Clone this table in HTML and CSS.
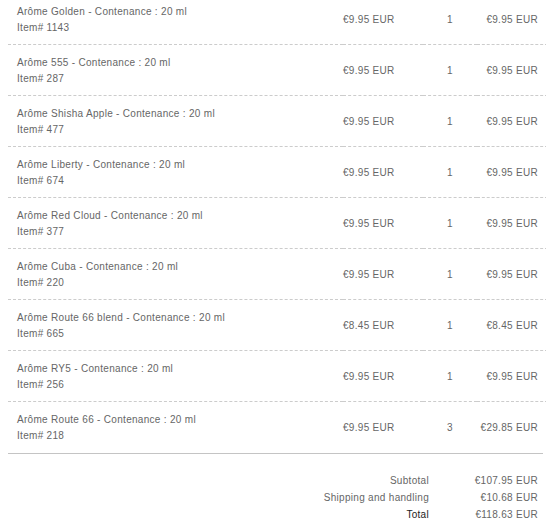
FILE: index.html
```html
<!DOCTYPE html>
<html>
<head>
<meta charset="utf-8">
<link rel="stylesheet" href="styles.css">
</head>
<body>
<div class="cart">
  <table class="items">
    <colgroup><col class="c-name"><col class="c-price"><col class="c-qty"><col class="c-total"></colgroup>
    <tbody>
      <tr class="first"><td class="name">Arôme Golden - Contenance : 20 ml<br>Item# 1143</td><td class="price">€9.95 EUR</td><td class="qty">1</td><td class="total">€9.95 EUR</td></tr>
      <tr><td class="name">Arôme 555 - Contenance : 20 ml<br>Item# 287</td><td class="price">€9.95 EUR</td><td class="qty">1</td><td class="total">€9.95 EUR</td></tr>
      <tr><td class="name">Arôme Shisha Apple - Contenance : 20 ml<br>Item# 477</td><td class="price">€9.95 EUR</td><td class="qty">1</td><td class="total">€9.95 EUR</td></tr>
      <tr><td class="name">Arôme Liberty - Contenance : 20 ml<br>Item# 674</td><td class="price">€9.95 EUR</td><td class="qty">1</td><td class="total">€9.95 EUR</td></tr>
      <tr><td class="name">Arôme Red Cloud - Contenance : 20 ml<br>Item# 377</td><td class="price">€9.95 EUR</td><td class="qty">1</td><td class="total">€9.95 EUR</td></tr>
      <tr><td class="name">Arôme Cuba - Contenance : 20 ml<br>Item# 220</td><td class="price">€9.95 EUR</td><td class="qty">1</td><td class="total">€9.95 EUR</td></tr>
      <tr><td class="name">Arôme Route 66 blend - Contenance : 20 ml<br>Item# 665</td><td class="price">€8.45 EUR</td><td class="qty">1</td><td class="total">€8.45 EUR</td></tr>
      <tr><td class="name">Arôme RY5 - Contenance : 20 ml<br>Item# 256</td><td class="price">€9.95 EUR</td><td class="qty">1</td><td class="total">€9.95 EUR</td></tr>
      <tr class="last"><td class="name">Arôme Route 66 - Contenance : 20 ml<br>Item# 218</td><td class="price">€9.95 EUR</td><td class="qty">3</td><td class="total">€29.85 EUR</td></tr>
    </tbody>
  </table>
  <div class="rule"></div>
  <table class="summary">
    <tr><td class="label">Subtotal</td><td class="value">€107.95 EUR</td></tr>
    <tr><td class="label">Shipping and handling</td><td class="value">€10.68 EUR</td></tr>
    <tr class="grand"><td class="label">Total</td><td class="value">€118.63 EUR</td></tr>
  </table>
</div>
</body>
</html>
```

FILE: styles.css
```css
html {
  background: #fff;
  overflow: hidden;
}
body {
  margin: 0 8px;
  font-family: "Liberation Sans", Arial, sans-serif;
  font-size: 10px;
  letter-spacing: 0.3px;
  line-height: 16px;
  color: #666;
}
.cart {
  width: 540px;
}
.items {
  width: 540px;
  border-collapse: collapse;
  table-layout: fixed;
}
.c-name { width: 335px; }
.c-price { width: 80px; }
.c-qty { width: 54px; }
.c-total { width: 71px; }
.items td {
  padding: 10px 0 8px;
  vertical-align: middle;
  border-bottom: 1px dashed #ccc;
  white-space: nowrap;
}
.items tr.first td {
  padding-top: 4px;
}
.items tr.last td {
  border-bottom: none;
}
.items .name {
  padding-left: 9px;
}
.items .price {
  text-align: left;
}
.items .qty {
  text-align: center;
}
.items .total {
  text-align: right;
  padding-right: 10px;
}
.rule {
  width: 535px;
  height: 0;
  border-top: 1px solid #c4c4c4;
  margin-top: 1px;
}
.summary {
  margin-top: 18px;
  width: 530px;
  border-collapse: collapse;
}
.summary td {
  padding: 0;
  height: 17px;
  text-align: right;
  white-space: nowrap;
}
.summary .value {
  width: 109px;
}
.summary .grand .label {
  color: #222;
}
```
